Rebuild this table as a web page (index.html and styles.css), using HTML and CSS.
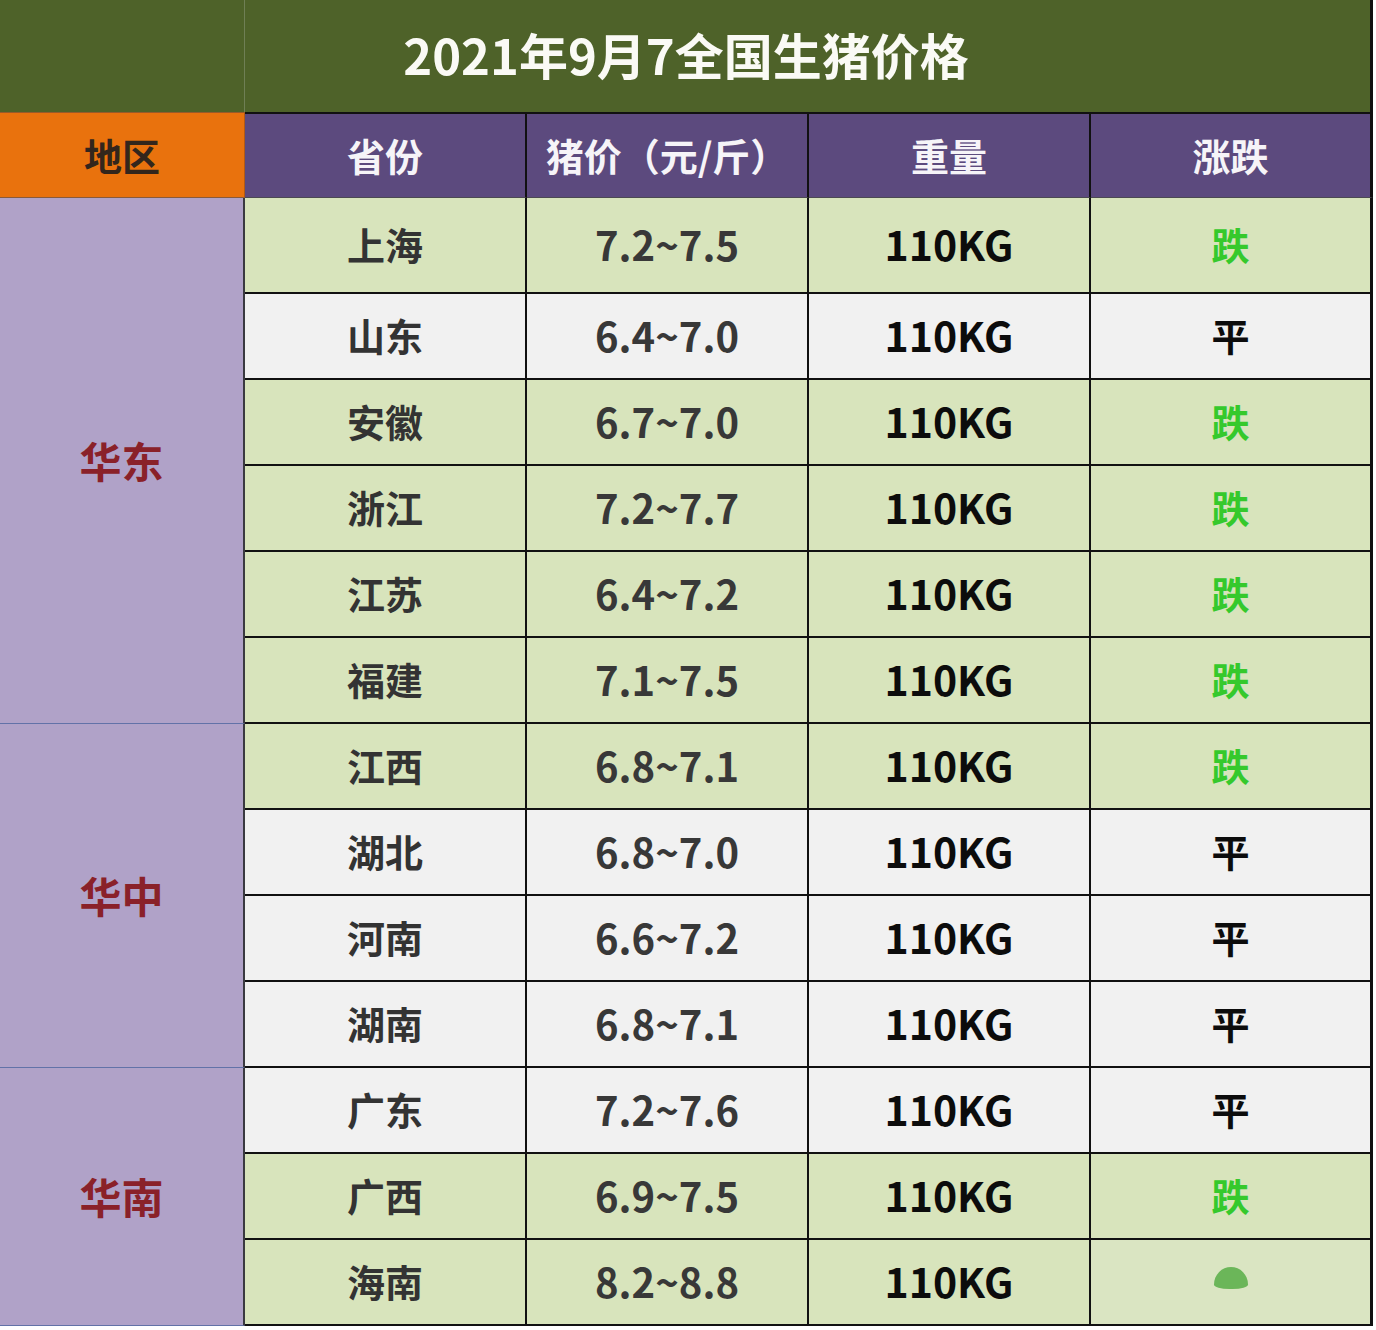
FILE: index.html
```html
<!DOCTYPE html>
<html lang="zh-CN">
<head>
<meta charset="utf-8">
<title>2021年9月7全国生猪价格</title>
<link rel="stylesheet" href="styles.css">
</head>
<body>
<div class="sheet">
  <div class="title"><span class="title-split"></span><h1>2021年9月7全国生猪价格</h1></div>

  <div class="hd hd-region">地区</div>
  <div class="hd">省份</div>
  <div class="hd">猪价（元/斤）</div>
  <div class="hd">重量</div>
  <div class="hd hd-last">涨跌</div>

  <div class="region r-east">华东</div>
  <div class="c g prov">上海</div><div class="c g price">7.2~7.5</div><div class="c g wt">110KG</div><div class="c g chg down">跌</div>
  <div class="c w prov">山东</div><div class="c w price">6.4~7.0</div><div class="c w wt">110KG</div><div class="c w chg">平</div>
  <div class="c g prov">安徽</div><div class="c g price">6.7~7.0</div><div class="c g wt">110KG</div><div class="c g chg down">跌</div>
  <div class="c g prov">浙江</div><div class="c g price">7.2~7.7</div><div class="c g wt">110KG</div><div class="c g chg down">跌</div>
  <div class="c g prov">江苏</div><div class="c g price">6.4~7.2</div><div class="c g wt">110KG</div><div class="c g chg down">跌</div>
  <div class="c g prov">福建</div><div class="c g price">7.1~7.5</div><div class="c g wt">110KG</div><div class="c g chg down">跌</div>

  <div class="region r-central">华中</div>
  <div class="c g prov">江西</div><div class="c g price">6.8~7.1</div><div class="c g wt">110KG</div><div class="c g chg down">跌</div>
  <div class="c w prov">湖北</div><div class="c w price">6.8~7.0</div><div class="c w wt">110KG</div><div class="c w chg">平</div>
  <div class="c w prov">河南</div><div class="c w price">6.6~7.2</div><div class="c w wt">110KG</div><div class="c w chg">平</div>
  <div class="c w prov">湖南</div><div class="c w price">6.8~7.1</div><div class="c w wt">110KG</div><div class="c w chg">平</div>

  <div class="region r-south">华南</div>
  <div class="c w prov">广东</div><div class="c w price">7.2~7.6</div><div class="c w wt">110KG</div><div class="c w chg">平</div>
  <div class="c g prov">广西</div><div class="c g price">6.9~7.5</div><div class="c g wt">110KG</div><div class="c g chg down">跌</div>
  <div class="c g prov">海南</div><div class="c g price">8.2~8.8</div><div class="c g wt">110KG</div><div class="c g chg blur"><span class="blob"></span></div>
</div>
</body>
</html>
```

FILE: styles.css
```css
* { box-sizing: border-box; margin: 0; padding: 0; }

html, body {
  background: #ffffff;
}

body {
  font-family: "Noto Sans CJK SC", "Noto Sans", sans-serif;
  font-weight: 700;
}

.sheet {
  width: 1373px;
  display: grid;
  grid-template-columns: 245px 282px 282px 282px 282px;
  grid-template-rows: 112px 86px 96px repeat(12, 86px);
}

.title {
  grid-column: 1 / 6;
  background: #4e6229;
  border-right: 3px solid #111;
  position: relative;
  display: flex;
  align-items: center;
  justify-content: center;
  padding-bottom: 6px;
}

.title-split {
  position: absolute;
  left: 244px;
  top: 0;
  bottom: 0;
  width: 1px;
  background: #6f7f55;
}

.title h1 {
  font-size: 49px;
  font-weight: 700;
  color: #fafaf5;
  line-height: 1;
  margin-left: 2px;
}

.hd {
  background: #5c4a7e;
  color: #f6f4f8;
  font-size: 38px;
  display: flex;
  align-items: center;
  justify-content: center;
  border-top: 2px solid #111;
  border-right: 2px solid #111;
  border-bottom: 1px solid #4c4a52;
  padding-bottom: 2px;
}

.hd-last {
  border-right: 3px solid #111;
}

.hd-region {
  background: #e9720d;
  color: #33261c;
  border-top: 1px solid #9a5a28;
  border-right: 1px solid #b25a14;
  border-bottom: 1px solid #8a5a3a;
}

.region {
  grid-column: 1;
  background: #b0a2c8;
  color: #8a2129;
  font-size: 42px;
  display: flex;
  align-items: center;
  justify-content: center;
  border-right: 2px solid #3a3a40;
  border-bottom: 1px solid #6272a8;
  padding-bottom: 3px;
}

.r-east { grid-row: span 6; }
.r-central { grid-row: span 4; }
.r-south { grid-row: span 3; }

.c {
  display: flex;
  align-items: center;
  justify-content: center;
  border-right: 2px solid #111;
  border-bottom: 2px solid #111;
  line-height: 1;
  padding-bottom: 3px;
}

.g { background: #d8e4bc; }
.w { background: #f1f1f1; }

.prov {
  font-size: 38px;
  color: #333333;
}

.price {
  font-size: 40px;
  color: #383838;
}

.wt {
  font-size: 41px;
  color: #0c0c0c;
}

.chg {
  font-size: 38px;
  color: #0c0c0c;
  border-right-width: 3px;
}

.down {
  color: #35c92c;
}

.blur {
  background: #dae5c2;
}

.blob {
  display: block;
  width: 34px;
  height: 22px;
  background: #5eb04e;
  border-radius: 50% 50% 45% 45% / 80% 80% 20% 20%;
  opacity: 0.9;
  margin-top: -6px;
}
```
